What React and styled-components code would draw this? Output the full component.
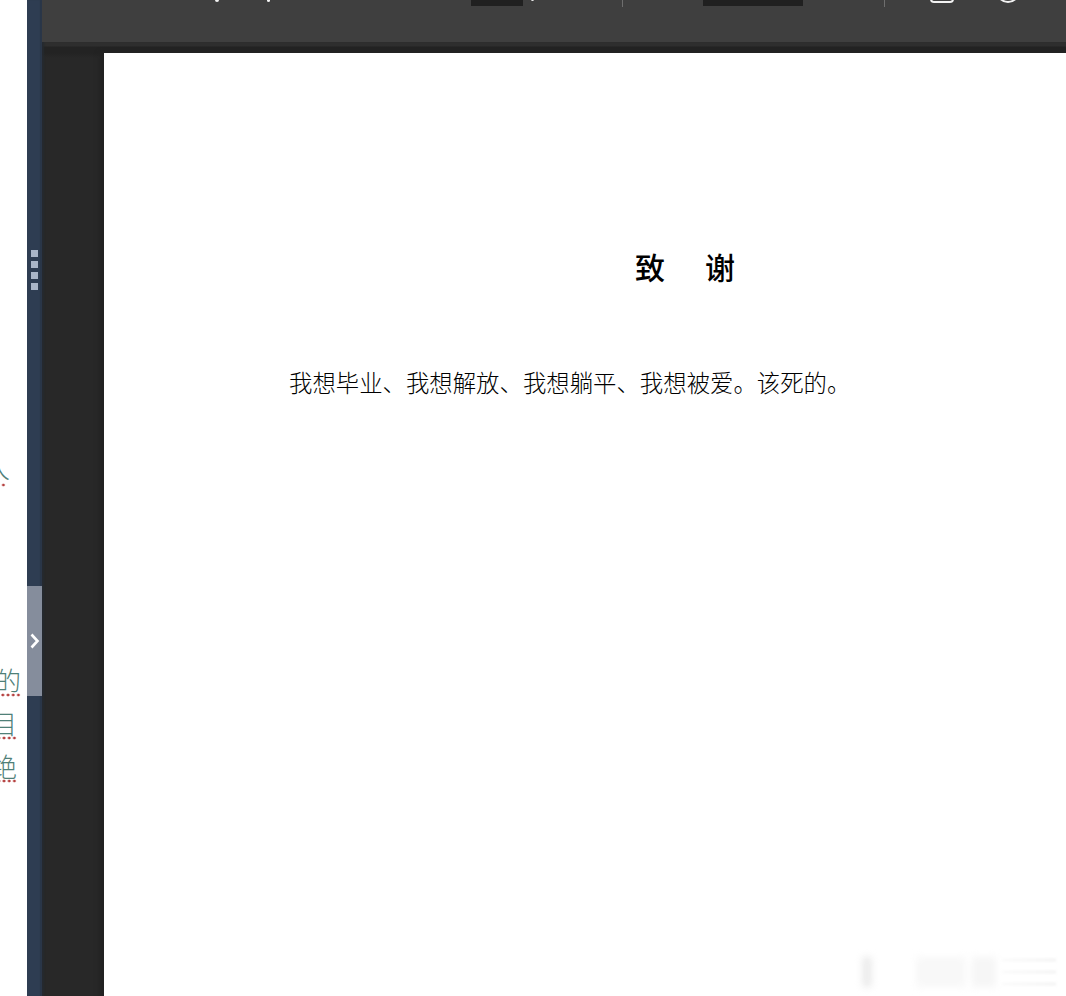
import React from "react";
import styled, { createGlobalStyle } from "styled-components";

const Global = createGlobalStyle`
  html, body { margin: 0; padding: 0; height: 100%; background: #fff; overflow: hidden; }
  #root { height: 100%; }
`;

const Shell = styled.div`
  width: 1066px;
  height: 996px;
  display: flex;
  overflow: hidden;
`;

const DocColumn = styled.div`
  width: 27px;
  flex: none;
  height: 100%;
  overflow: hidden;
  display: flex;
  flex-direction: column;
  align-items: flex-end;
  padding-top: 455px;
  box-sizing: border-box;
  background: #fff;
  font-family: "Noto Sans CJK SC", sans-serif;
  font-weight: 300;
`;

const DocLine = styled.div`
  width: 26px;
  height: 32px;
  margin-right: ${(p) => p.$inset}px;
  margin-top: ${(p) => p.$gap || 0}px;
  flex: none;
  font-size: 26px;
  line-height: ${(p) => p.$lift || 30}px;
  text-indent: ${(p) => p.$shift || 0}px;
  white-space: nowrap;
  color: #4f8078;
  background: radial-gradient(circle, #b5403f 1.1px, transparent 1.7px) right bottom / 5.2px 4px repeat-x;
`;

const Rail = styled.div`
  width: 15px;
  flex: none;
  height: 100%;
  background: #2e3d52;
  position: relative;
  box-shadow: inset -2px 0 1px #2a3648;
`;

const Grip = styled.div`
  position: absolute;
  left: 4px;
  top: 250px;
  display: flex;
  flex-direction: column;
  gap: 4px;
`;

const GripDot = styled.span`
  width: 7px;
  height: 7px;
  background: #aab6c8;
`;

const CollapseHandle = styled.div`
  position: absolute;
  left: 0;
  top: 586px;
  width: 15px;
  height: 110px;
  background: #858d9c;
  display: flex;
  align-items: center;
  justify-content: center;
`;

const Viewer = styled.div`
  flex: 1;
  min-width: 0;
  display: flex;
  flex-direction: column;
  background: #282828;
`;

const Toolbar = styled.div`
  height: 42px;
  flex: none;
  background: #3f3f3f;
  overflow: hidden;
  display: flex;
  align-items: flex-end;
  padding-bottom: 36px;
  box-sizing: border-box;
`;

const Slot = styled.div`
  flex: none;
  width: ${(p) => p.$w}px;
  margin-left: ${(p) => p.$ml}px;
  height: 24px;
`;

const Field = styled(Slot)`
  background: #202020;
`;

const Divider = styled(Slot)`
  width: 1px;
  margin-bottom: -1px;
  background: #6e6e6e;
`;

const WhiteTick = styled(Slot)`
  height: 20px;
  margin-bottom: ${(p) => p.$up}px;
  background: #f2f2f2;
  border-radius: 2px;
`;

const ToolIcon = styled.svg`
  flex: none;
  margin-left: ${(p) => p.$ml}px;
  margin-bottom: 1px;
  display: block;
`;

const Stage = styled.div`
  flex: 1;
  min-height: 0;
  display: flex;
  align-items: flex-start;
  padding: 11px 0 0 62px;
  box-shadow: inset 3px 0 2px -1px #252a30;
  background: linear-gradient(#2e2e2e 0, #2e2e2e 4px, #232323 5px, #232323 11px, #282828 16px);
`;

const Page = styled.div`
  flex: 1;
  height: 1100px;
  background: #fff;
  box-shadow: -4px 0 5px #222;
  position: relative;
  font-family: "Noto Sans CJK SC", "Noto Sans CJK JP", sans-serif;
  padding-top: 193px;
  box-sizing: border-box;
`;

const Heading = styled.h1`
  margin: 0 0 0 531px;
  display: flex;
  gap: 40px;
  font-size: 30px;
  line-height: 40px;
  font-weight: 500;
  color: #000;
`;

const Body = styled.p`
  margin: 79px 0 0 185px;
  font-size: 23.4px;
  line-height: 34px;
  font-weight: 300;
  color: #000;
  white-space: nowrap;
`;

const Watermark = styled.div`
  position: absolute;
  left: 752px;
  top: 904px;
  width: 200px;
  height: 30px;
  filter: blur(1.5px);
  display: flex;
  align-items: stretch;
`;

const Smudge = styled.span`
  flex: none;
  width: ${(p) => p.$w}px;
  margin-left: ${(p) => p.$ml}px;
  background: ${(p) => p.$c};
  filter: blur(3px);
`;

const Streaks = styled.div`
  flex: 1;
  margin-left: 6px;
  display: flex;
  flex-direction: column;
  justify-content: space-between;
  padding: 2px 0;
`;

const Streak = styled.span`
  height: 2px;
  background: linear-gradient(90deg, #f9f9f9, #ededed);
`;

export default function App() {
  return (
    <Shell>
      <Global />
      <DocColumn>
        <DocLine $inset={21} $shift={4} $lift={24}>人</DocLine>
        <DocLine $inset={6} $gap={178}>的</DocLine>
        <DocLine $inset={10} $gap={11}>目</DocLine>
        <DocLine $inset={10} $gap={11}>绝</DocLine>
      </DocColumn>
      <Rail>
        <Grip>
          <GripDot />
          <GripDot />
          <GripDot />
          <GripDot />
        </Grip>
        <CollapseHandle>
          <svg width="11" height="16" viewBox="0 0 11 16" fill="none">
            <path d="M2.5 1.5l6 6.5-6 6.5" stroke="#fff" strokeWidth="2.6" />
          </svg>
        </CollapseHandle>
      </Rail>
      <Viewer>
        <Toolbar>
          <WhiteTick $w={4} $ml={173} $up={4} />
          <WhiteTick $w={3} $ml={48} $up={4} />
          <Field $w={52} $ml={201} />
          <WhiteTick $w={3} $ml={8} $up={5} />
          <Divider $w={1} $ml={88} />
          <Field $w={100} $ml={80} />
          <Divider $w={1} $ml={81} />
          <ToolIcon $ml={44} width="26" height="26" viewBox="0 0 26 26" fill="none">
            <rect x="2" y="1" width="22" height="22" rx="3" stroke="#f2f2f2" strokeWidth="2" />
          </ToolIcon>
          <ToolIcon $ml={40} width="26" height="26" viewBox="0 0 26 26" fill="none">
            <circle cx="13" cy="12" r="11" stroke="#f2f2f2" strokeWidth="2" />
          </ToolIcon>
        </Toolbar>
        <Stage>
          <Page>
            <Heading>
              <span>致</span>
              <span>谢</span>
            </Heading>
            <Body>我想毕业、我想解放、我想躺平、我想被爱。该死的。</Body>
            <Watermark>
              <Smudge $w={10} $ml={6} $c="#ececec" />
              <Smudge $w={50} $ml={44} $c="#f8f8f8" />
              <Smudge $w={24} $ml={6} $c="#f6f6f6" />
              <Streaks>
                <Streak />
                <Streak />
                <Streak />
              </Streaks>
            </Watermark>
          </Page>
        </Stage>
      </Viewer>
    </Shell>
  );
}
